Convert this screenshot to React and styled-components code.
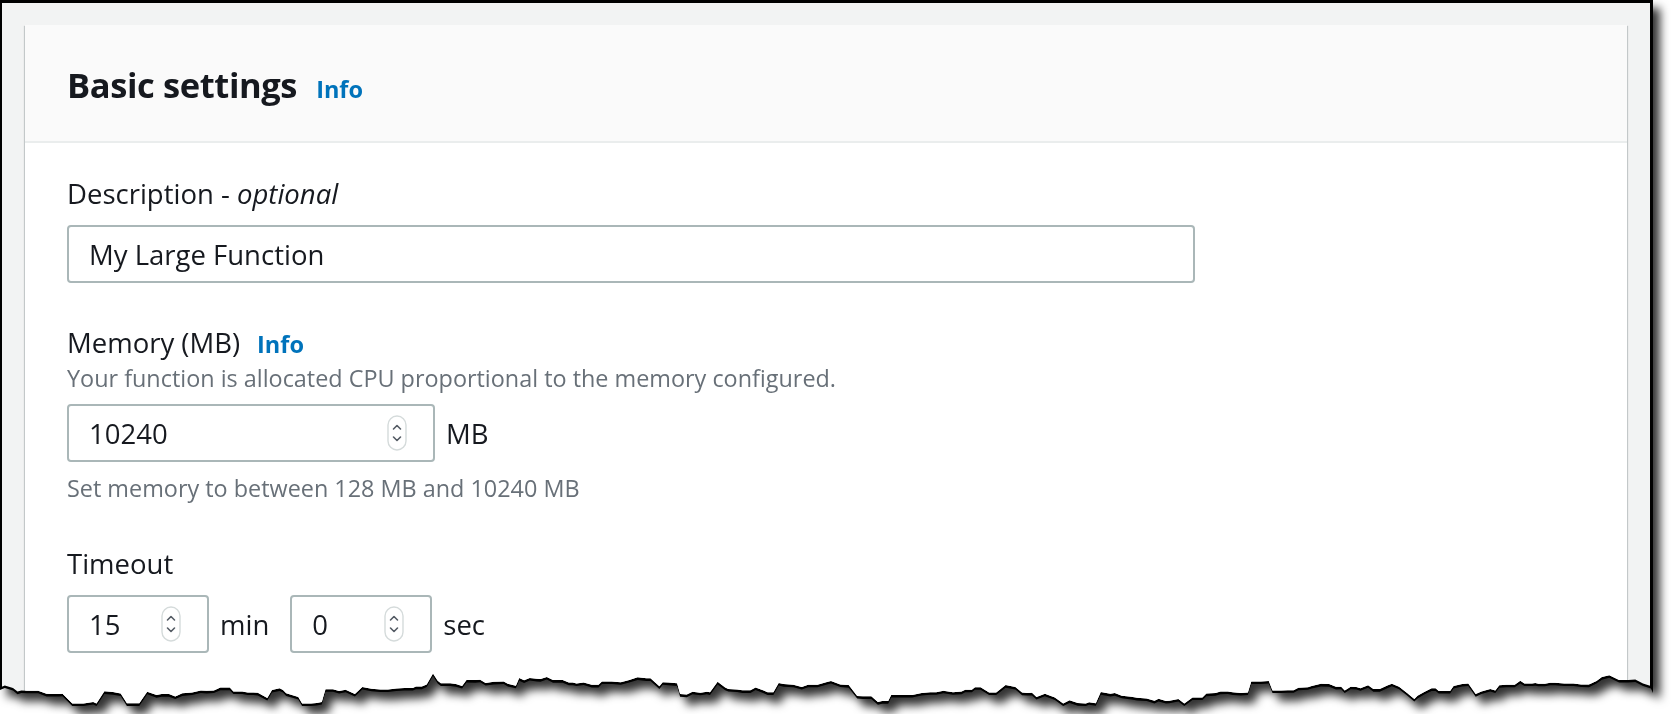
import styled, { createGlobalStyle } from "styled-components";

const GlobalStyle = createGlobalStyle`
    html, body {
        margin: 0;
        padding: 0;
        background: #ffffff;
    }
    body {
        font-family: 'Open Sans', 'Noto Sans', sans-serif;
        color: #16191f;
    }
`

// torn paper edge, made once with a seeded random walk
const SHEET_W = 1653;
const SHEET_H = 714;

const seeded = (seed) => () => {
    seed |= 0;
    seed = (seed + 0x6d2b79f5) | 0;
    let t = Math.imul(seed ^ (seed >>> 15), 1 | seed);
    t = (t + Math.imul(t ^ (t >>> 7), 61 | t)) ^ t;
    return ((t ^ (t >>> 14)) >>> 0) / 4294967296;
};

const tornEdge = () => {
    const rnd = seeded(20240);
    const pts = [];
    let x = 0;
    let y = 690;
    while (x < SHEET_W) {
        pts.push([x, y]);
        const r = rnd();
        x += 3 + rnd() * 7;
        const base = 691 + 7 * Math.sin(x / 140) + 3 * Math.sin(x / 53);
        if (r < 0.08) {
            y -= 6 + rnd() * 7;
        } else if (r < 0.16) {
            y += 5 + rnd() * 6;
        } else if (r < 0.3) {
            // flat piece
        } else {
            y += (rnd() - 0.5) * 7 + (base - y) * 0.25;
        }
        y = Math.max(676, Math.min(706, y));
    }
    pts.push([SHEET_W, 693]);
    return pts;
};

const EDGE = tornEdge();

const clipFor = (dx, dy) => {
    const w = SHEET_W - dx;
    const edge = [...EDGE]
        .reverse()
        .map(([x, y]) => `${(x - dx).toFixed(1)}px ${(y - dy).toFixed(1)}px`)
        .join(", ");
    return `polygon(0px 0px, ${w}px 0px, ${edge})`;
};

const FRAME_CLIP = clipFor(0, 0);
const SURFACE_CLIP = clipFor(2, 3 + 2.6);

const Spinner = () => (
    <SpinIcon viewBox="0 0 20 36" aria-hidden="true">
        <rect x="1" y="1" width="18" height="34" rx="9" fill="#fff" stroke="#d5dbdb" strokeWidth="1.4" />
        <path d="M6.5 14 L10 10.5 L13.5 14" fill="none" stroke="#545b64" strokeWidth="1.6" strokeLinecap="round" strokeLinejoin="round" />
        <path d="M6.5 22 L10 25.5 L13.5 22" fill="none" stroke="#545b64" strokeWidth="1.6" strokeLinecap="round" strokeLinejoin="round" />
    </SpinIcon>
)

const NumberInput = ({ value, width }) => (
    <InputBox $width={width} $spin>
        <Field value={value} readOnly />
        <Spinner />
    </InputBox>
)

const App = () => {
    return (
        <>
            <GlobalStyle />
            <Sheet>
                <Frame style={{ clipPath: FRAME_CLIP }}>
                    <Surface style={{ clipPath: SURFACE_CLIP }}>
                        <Card>
                            <CardHeader>
                                <Title>Basic settings</Title>
                                <InfoLink>Info</InfoLink>
                            </CardHeader>
                            <CardBody>
                                <FormField>
                                    <Label>Description - <em>optional</em></Label>
                                    <InputBox $width={1128}>
                                        <Field value="My Large Function" readOnly />
                                    </InputBox>
                                </FormField>

                                <FormField>
                                    <LabelRow>
                                        <Label>Memory (MB)</Label>
                                        <InfoLink>Info</InfoLink>
                                    </LabelRow>
                                    <Hint>Your function is allocated CPU proportional to the memory configured.</Hint>
                                    <InputRow>
                                        <NumberInput value="10240" width={368} />
                                        <Unit>MB</Unit>
                                    </InputRow>
                                    <Hint $after>Set memory to between 128 MB and 10240 MB</Hint>
                                </FormField>

                                <FormField>
                                    <Label>Timeout</Label>
                                    <InputRow>
                                        <NumberInput value="15" width={142} />
                                        <Unit $gapAfter>min</Unit>
                                        <NumberInput value="0" width={142} />
                                        <Unit>sec</Unit>
                                    </InputRow>
                                </FormField>
                            </CardBody>
                        </Card>
                    </Surface>
                </Frame>
            </Sheet>
        </>
    )
}

export default App;


const Sheet = styled.div`
    width: ${SHEET_W}px;
    height: ${SHEET_H}px;
    filter: drop-shadow(7px 8px 5px rgba(0, 0, 0, 0.8));
`
const Frame = styled.div`
    box-sizing: border-box;
    width: 100%;
    height: 100%;
    background: #000;
    padding: 3px 3px 0 2px;
`
const Surface = styled.div`
    box-sizing: border-box;
    height: 100%;
    overflow: hidden;
    background: #f2f3f3;
    padding: 22px 23px 0 23px;
`
const Card = styled.div`
    background: #ffffff;
    min-height: 760px;
    box-shadow: 0 1px 1px 0 rgba(0, 28, 36, 0.3), 1px 1px 1px 0 rgba(0, 28, 36, 0.15), -1px 1px 1px 0 rgba(0, 28, 36, 0.15);
`
const CardHeader = styled.div`
    display: flex;
    align-items: baseline;
    gap: 19px;
    height: 118px;
    box-sizing: border-box;
    padding: 38px 42px 0 42px;
    background: #fafafa;
    border-bottom: 2px solid #eaeded;
`
const Title = styled.h2`
    margin: 0;
    font-size: 34.5px;
    line-height: 44px;
    font-weight: 700;
    letter-spacing: -0.4px;
    color: #16191f;
`
const InfoLink = styled.a`
    font-size: 23.5px;
    font-weight: 700;
    color: #0073bb;
    text-decoration: none;
    cursor: pointer;
`
const CardBody = styled.div`
    padding: 33px 42px 40px 42px;
    display: flex;
    flex-direction: column;
    gap: 42px;
`
const FormField = styled.div`
    display: flex;
    flex-direction: column;
    align-items: flex-start;
`
const LabelRow = styled.div`
    display: flex;
    align-items: baseline;
    gap: 17px;
`
const Label = styled.label`
    font-size: 27.5px;
    line-height: 36px;
    color: #16191f;
    margin-bottom: 13px;

    em {
        font-style: italic;
    }

    ${LabelRow} & {
        margin-bottom: 0;
    }
`
const Hint = styled.div`
    font-size: 23.4px;
    line-height: 32px;
    color: #687078;
    margin: ${p => p.$after ? "10px 0 0 0" : "1px 0 10px 0"};
`
const InputRow = styled.div`
    display: flex;
    align-items: center;
    gap: 11px;
`
const InputBox = styled.div`
    box-sizing: border-box;
    width: ${p => p.$width}px;
    height: 58px;
    display: flex;
    align-items: center;
    padding: 0 ${p => p.$spin ? "26px" : "20px"} 0 20px;
    border: 2px solid #aab7b8;
    border-radius: 4px;
    background: #ffffff;
`
const Field = styled.input`
    flex: 1;
    min-width: 0;
    border: none;
    outline: none;
    padding: 0;
    background: transparent;
    font-family: 'Open Sans', 'Noto Sans', sans-serif;
    font-size: 27.5px;
    color: #16191f;
`
const SpinIcon = styled.svg`
    width: 20px;
    height: 36px;
    flex: none;
`
const Unit = styled.span`
    font-size: 27.5px;
    color: #16191f;
    margin-right: ${p => p.$gapAfter ? "10px" : "0"};
`
